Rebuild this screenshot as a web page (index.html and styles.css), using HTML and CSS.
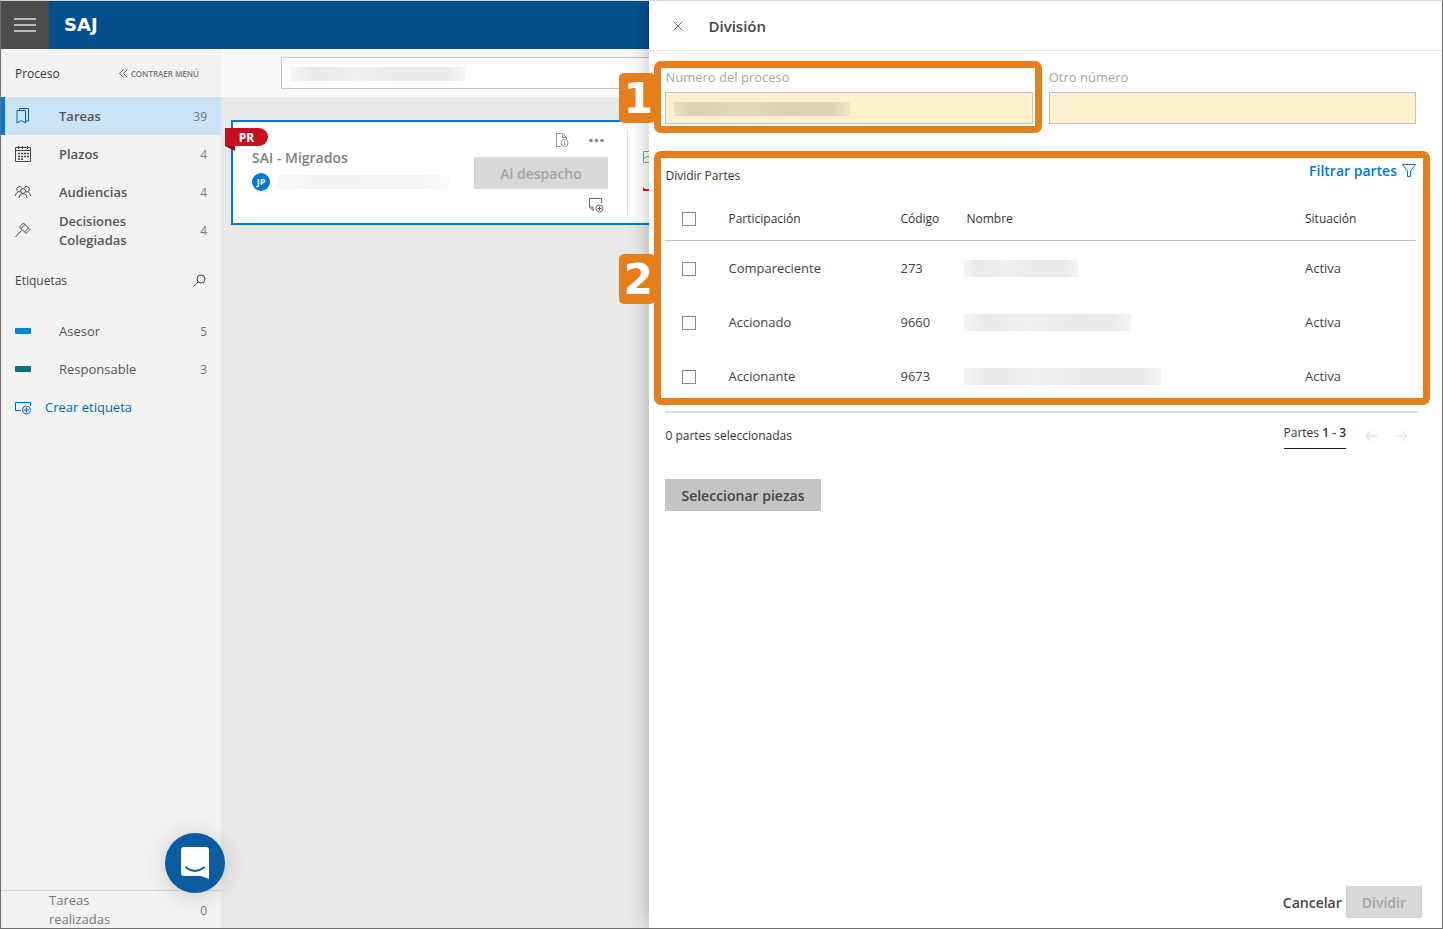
FILE: index.html
```html
<!DOCTYPE html>
<html lang="es">
<head>
<meta charset="utf-8">
<title>SAJ - División</title>
<link rel="stylesheet" href="styles.css">
</head>
<body>
<div class="app">
  <header class="topbar">
    <button class="menu-btn" aria-label="Menú">
      <svg width="22" height="14" viewBox="0 0 22 14" stroke="#ddd" stroke-width="1.500"><path d="M0 1h22M0 7h22M0 13h22"/></svg>
    </button>
    <span class="brand">SAJ</span>
  </header>

  <div class="workspace">
    <aside class="sidebar">
      <div class="side-head">
        <span class="side-title">Proceso</span>
        <button class="collapse">
          <svg width="9" height="9" viewBox="0 0 9 9" fill="none" stroke="#666" stroke-width="1"><path d="M4.500 .5l-4 4 4 4M8.500 .5l-4 4 4 4"/></svg>
          CONTRAER MENÚ
        </button>
      </div>
      <nav class="nav">
        <a class="nav-item active" href="#tareas">
          <svg class="nav-icon" viewBox="0 0 16 16" fill="none" stroke="#0060b0"><path d="M2 2.500h8.500v12.500l-4.250-2.500L2 15zM4.500 2.500v-2h9v12.500h-3"/></svg>
          <span class="nav-label">Tareas</span><span class="count">39</span>
        </a>
        <a class="nav-item" href="#plazos">
          <svg class="nav-icon" viewBox="0 0 16 16" fill="none" stroke="#444"><path d="M.5 1.500h15v14H.5zM.5 4.500h15M3.500 0v3M7.500 0v3M12.500 0v3"/><path stroke-width="1.500" stroke-dasharray="2 1" d="M3 7.500h11M3 10.500h11M3 13.200h5"/></svg>
          <span class="nav-label">Plazos</span><span class="count">4</span>
        </a>
        <a class="nav-item" href="#audiencias">
          <svg class="nav-icon" viewBox="0 0 16 16" fill="none" stroke="#444"><circle cx="8" cy="7" r="2.500"/><path d="M4 14c.2-3 1.800-4.300 4-4.300s3.800 1.300 4 4.300M5.200 7.800A2.700 2.700 0 1 1 6.500 3.500M10.800 7.800A2.700 2.700 0 1 0 9.500 3.500M.5 12c.1-2.300 1-3.600 2.700-4.200M15.500 12c-.1-2.300-1-3.600-2.700-4.200"/></svg>
          <span class="nav-label">Audiencias</span><span class="count">4</span>
        </a>
        <a class="nav-item" href="#decisiones">
          <svg class="nav-icon" viewBox="0 0 16 16" fill="none" stroke="#444"><path d="M8.500 1l6.500 6.500M4.500 5l6.500 6.500M8.500 1l-4 4M15 7.500l-4 4M10 2.500l-4 4M13.500 6l-4 4M6.500 8.500l-6 6.500"/></svg>
          <span class="nav-label">Decisiones Colegiadas</span><span class="count">4</span>
        </a>
      </nav>
      <div class="tags-head">
        <span class="side-title strong">Etiquetas</span>
        <button class="icon-btn" aria-label="Buscar etiquetas">
          <svg width="13" height="13" viewBox="0 0 13 13" fill="none" stroke="#444"><circle cx="8" cy="5" r="4"/><path d="M5 8L.5 12.500"/></svg>
        </button>
      </div>
      <nav class="nav">
        <a class="nav-item tag" href="#asesor"><span class="swatch blue"></span><span class="nav-label">Asesor</span><span class="count">5</span></a>
        <a class="nav-item tag" href="#responsable"><span class="swatch teal"></span><span class="nav-label">Responsable</span><span class="count">3</span></a>
        <a class="nav-item create" href="#crear">
          <svg class="nav-icon" viewBox="0 0 16 16" fill="none" stroke="#0066b8"><path d="M6 11.500H.5V3.500h15V7"/><circle cx="11.500" cy="11" r="4"/><path d="M11.500 8.500v5M9 11h5"/></svg>
          <span class="nav-label">Crear etiqueta</span>
        </a>
      </nav>
      <a class="side-foot" href="#realizadas"><span class="foot-label">Tareas realizadas</span><span class="count">0</span></a>
    </aside>

    <main class="main">
      <div class="search-row">
        <div class="search"><span class="mask search-mask"></span></div>
      </div>
      <article class="card">
        <div class="flag">PR</div>
        <div class="card-info">
          <h2 class="card-title">SAI - Migrados</h2>
          <div class="person"><span class="avatar">JP</span><span class="mask person-mask"></span></div>
        </div>
        <div class="card-actions">
          <div class="card-tools">
            <svg width="13" height="15" viewBox="0 0 13 15" fill="none" stroke="#999"><path d="M5 13.500H.5V.5h6l4 4V6M6.500 .5v4h4"/><circle cx="8.500" cy="10" r="3.500"/><path d="M8.500 8v4"/></svg>
            <svg width="15" height="5" viewBox="0 0 15 5" fill="#888"><circle cx="2" cy="2.500" r="1.800"/><circle cx="7.500" cy="2.500" r="1.800"/><circle cx="13" cy="2.500" r="1.800"/></svg>
          </div>
          <button class="btn muted dispatch" disabled>Al despacho</button>
          <svg class="note" width="15" height="15" viewBox="0 0 15 15" fill="none" stroke="#666"><path d="M12.500 5V.5H.5v8.500h3.500v3.500L.5 9M4 12h1"/><circle cx="10.500" cy="10.500" r="3.500"/><path d="M10.500 8.500v4M8.500 10.500h4"/></svg>
        </div>
        <div class="card-extra">
          <svg width="12" height="12" viewBox="0 0 12 12" fill="none" stroke="#999"><path d="M.5 .5h11v11H.5zM.5 8l3-2.500h8"/></svg>
          <svg width="12" height="4" viewBox="0 0 12 4" fill="#f01020"><path d="M0 0l2 2h10v2H0z"/></svg>
        </div>
      </article>
    </main>
  </div>

  <section class="drawer" aria-labelledby="drawer-title">
    <header class="drawer-head">
      <button class="icon-btn" aria-label="Cerrar">
        <svg width="10" height="10" viewBox="0 0 10 10" stroke="#666" stroke-width="1"><path d="M.5 .5l9 9M9.500 .5l-9 9"/></svg>
      </button>
      <h1 class="drawer-title" id="drawer-title">División</h1>
    </header>

    <div class="drawer-body">
      <div class="fields">
        <div class="field framed">
          <label for="numero">Numero del proceso</label>
          <div class="input-wrap"><input id="numero" type="text"><span class="mask input-mask"></span></div>
          <span class="step">1</span>
        </div>
        <div class="field">
          <label for="otro">Otro número</label>
          <input id="otro" type="text">
        </div>
      </div>

      <div class="parts framed">
        <div class="parts-head">
          <h2 class="parts-title">Dividir Partes</h2>
          <button class="filter">Filtrar partes
            <svg width="14" height="13" viewBox="0 0 14 13" fill="none" stroke="#0078d7"><path d="M.5 .5h13L8.500 7v5.500h-3V7z"/></svg>
          </button>
        </div>
        <table class="table">
          <colgroup><col class="c-check"><col class="c-part"><col class="c-code"><col><col class="c-state"></colgroup>
          <thead>
            <tr><th><input type="checkbox" aria-label="Seleccionar todas"></th><th>Participación</th><th>Código</th><th>Nombre</th><th>Situación</th></tr>
          </thead>
          <tbody>
            <tr><td><input type="checkbox" aria-label="Compareciente"></td><td>Compareciente</td><td>273</td><td><span class="mask name-a"></span></td><td>Activa</td></tr>
            <tr><td><input type="checkbox" aria-label="Accionado"></td><td>Accionado</td><td>9660</td><td><span class="mask name-b"></span></td><td>Activa</td></tr>
            <tr><td><input type="checkbox" aria-label="Accionante"></td><td>Accionante</td><td>9673</td><td><span class="mask name-c"></span></td><td>Activa</td></tr>
          </tbody>
        </table>
        <span class="step">2</span>
      </div>

      <div class="pager">
        <span class="selected">0 partes seleccionadas</span>
        <span class="range">Partes <b>1 - 3</b></span>
        <button class="icon-btn" aria-label="Anterior" disabled><svg width="12" height="12" viewBox="0 0 12 12" fill="none" stroke="#d8d8d8"><path d="M12 6H.8M6 .8L.8 6 6 11.200"/></svg></button>
        <button class="icon-btn" aria-label="Siguiente" disabled><svg width="12" height="12" viewBox="0 0 12 12" fill="none" stroke="#d8d8d8"><path d="M0 6h11.200M6 .8L11.200 6 6 11.200"/></svg></button>
      </div>

      <button class="btn pieces">Seleccionar piezas</button>
    </div>

    <footer class="drawer-foot">
      <button class="cancel">Cancelar</button>
      <button class="btn muted" disabled>Dividir</button>
    </footer>
  </section>

  <button class="chat" aria-label="Chat">
    <svg width="28" height="32" viewBox="0 0 28 32"><path fill="#fff" d="M3 0h22a3 3 0 0 1 3 3v29l-8-3H3a3 3 0 0 1-3-3V3a3 3 0 0 1 3-3z"/><path d="M5 20.500q9 7 18 0" fill="none" stroke="#0c5ca2" stroke-width="2" stroke-linecap="round"/></svg>
  </button>
</div>
</body>
</html>
```
FILE: styles.css
```css
* { box-sizing: border-box; }

body {
  margin: 0;
  font-family: "Open Sans", "Noto Sans", sans-serif;
  font-size: 13px;
  line-height: 19px;
  color: #333;
}

button {
  padding: 0;
  border: 0;
  background: none;
  font: inherit;
  color: inherit;
}

a { color: inherit; text-decoration: none; }
h1, h2 { margin: 0; }
svg { display: block; flex: none; }

.app {
  position: relative;
  display: flex;
  flex-direction: column;
  height: 100vh;
  border: 1px solid #707070;
  border-top-color: #d6d8dc;
  overflow: hidden;
}

.topbar {
  display: flex;
  align-items: center;
  gap: 15px;
  height: 48px;
  flex: none;
  background: #03508c;
}

.menu-btn {
  display: grid;
  place-items: center;
  width: 48px;
  height: 48px;
  background: #4c4c4c;
}

.brand {
  font: bold 18px/24px "DejaVu Sans", sans-serif;
  color: #fff;
}

.workspace { display: flex; flex: 1; min-height: 0; }

/* Sidebar */
.sidebar {
  display: flex;
  flex-direction: column;
  width: 220px;
  flex: none;
  background: #f3f3f3;
}

.side-head, .tags-head {
  display: flex;
  align-items: center;
  justify-content: space-between;
  padding: 0 22px 0 14px;
  height: 48px;
  flex: none;
}

.side-title { font-size: 12px; color: #333; }
.side-title.strong { font-weight: 500; color: #444; }
.tags-head { height: 63px; padding-right: 15px; }

.collapse {
  display: flex;
  align-items: center;
  gap: 3px;
  font-size: 8px;
  font-weight: 600;
  color: #777;
}

.nav-item {
  display: flex;
  align-items: center;
  height: 38px;
  padding: 0 14px;
  font-weight: 600;
  color: #555;
}

.nav-item.active {
  padding-left: 10px;
  border-left: 4px solid #0078d7;
  background: #cbe3f7;
}

.nav-icon { width: 16px; height: 16px; }
.nav-label { width: 110px; margin-left: 28px; padding-top: 1px; }
.count { margin-left: auto; font-size: 12px; font-weight: 400; color: #777; }
.nav-item.tag { font-weight: 400; }
.nav-item.create { font-weight: 400; color: #0067b8; }
.create .nav-label { margin-left: 14px; }

.swatch { width: 16px; height: 6px; border-radius: 1px; }
.blue { background: #0086d6; }
.teal { background: #007085; }

.side-foot {
  display: flex;
  align-items: center;
  height: 38px;
  margin-top: auto;
  padding: 1px 14px 0 48px;
  border-top: 1px solid #d4d4d4;
  color: #777;
}

.foot-label { width: 80px; }

/* Task list */
.main { flex: 1; min-width: 0; background: #e9e9e9; }

.search-row { padding: 8px 0 8px 60px; background: #f9f9f9; }

.search {
  display: flex;
  align-items: center;
  height: 32px;
  padding-left: 9px;
  border: 1px solid #c4c4c4;
  background: #fff;
}

.mask {
  display: block;
  background: linear-gradient(90deg, #f6f6f6, #e9e9e9 12%, #f0f0f0 38%, #eaeaea 65%, #ebebeb 90%, #f5f5f5);
}

.search-mask { width: 174px; height: 14px; margin-top: 2px; }

.card {
  position: relative;
  display: flex;
  height: 105px;
  margin: 23px 10px 0;
  padding: 8px 0;
  border: 2px solid #0078d7;
  background: #fff;
}

.flag {
  position: absolute;
  top: 6px;
  left: -8px;
  width: 43px;
  height: 18px;
  border-radius: 0 9px 9px 0;
  background: #c50f1f;
  color: #fff;
  font-size: 12px;
  font-weight: 700;
  line-height: 19px;
  text-align: center;
}

.flag::after {
  content: "";
  position: absolute;
  top: 18px;
  left: 0;
  border-top: 5px solid #8a0a14;
  border-left: 10px solid transparent;
}

.card-info { width: 241px; flex: none; padding: 18px 0 0 19px; }
.card-title { font-size: 14px; line-height: 19px; font-weight: 600; color: #808080; }
.person { display: flex; align-items: center; gap: 6px; margin-top: 6px; }

.avatar {
  width: 18px;
  height: 18px;
  border-radius: 50%;
  background: #0078d7;
  color: #fff;
  font-size: 9px;
  font-weight: 700;
  line-height: 18px;
  text-align: center;
}

.person-mask {
  width: 174px;
  height: 14px;
  background: linear-gradient(90deg, #fafafa, #f3f3f3 25%, #f5f5f5 85%, #fcfcfc);
}

.card-actions {
  display: flex;
  flex-direction: column;
  align-items: flex-end;
  width: 154px;
  flex: none;
  padding-right: 19px;
  border-right: 1px solid #e0e0e0;
}

.card-tools { display: flex; align-items: center; gap: 20px; padding: 3px 4px 9px 0; }

.btn {
  height: 32px;
  padding: 0 16px;
  background: #c4c4c4;
  font-size: 14px;
  font-weight: 600;
  color: #444;
}

.btn.muted { background: #d8d8d8; color: #a4a4a4; }
.dispatch { width: 134px; padding: 0; }
.note { margin: 9px 4px 0 0; }

.card-extra {
  display: flex;
  flex-direction: column;
  gap: 24px;
  padding: 21px 0 0 15px;
}

/* Drawer */
.drawer {
  position: absolute;
  top: 0;
  right: 0;
  bottom: 0;
  display: flex;
  flex-direction: column;
  width: 55%;
  background: #fff;
  box-shadow: 0 0 20px rgba(0, 0, 0, .28);
}

.drawer-head {
  display: flex;
  align-items: center;
  gap: 25px;
  height: 50px;
  flex: none;
  padding-left: 24px;
  border-bottom: 1px solid #e6e6e6;
}

.drawer-title { font-size: 15px; line-height: 20px; font-weight: 600; color: #444; }
.drawer-body { flex: 1; padding: 17px 26px 0 16px; }

.fields { display: grid; grid-template-columns: 1fr 1fr; gap: 16px; }
.field label { display: block; margin-bottom: 5px; color: #a6a6a6; }

.field input {
  display: block;
  width: 100%;
  height: 32px;
  padding: 0 8px;
  border: 1px solid #c2c2c2;
  background: #fff1cd;
  font: inherit;
}

.input-wrap { position: relative; }

.input-mask {
  position: absolute;
  top: 10px;
  left: 9px;
  width: 176px;
  height: 14px;
  background: linear-gradient(90deg, #eadfbf, #ddd1b3 10%, #e3d8b9 38%, #ddd2b3 65%, #dfd4b5 90%, #f3e6c5);
}

.framed { position: relative; }

.framed::after {
  content: "";
  position: absolute;
  inset: -7px -9px -9px -11px;
  border: 7px solid #e57f1b;
  border-radius: 7px;
  pointer-events: none;
}

.step {
  position: absolute;
  top: 5px;
  left: -46px;
  width: 36px;
  height: 50px;
  border-radius: 5px;
  background: #e57f1b;
  color: #fff;
  font: bold 42px/52px "DejaVu Sans", sans-serif;
  text-align: center;
  text-indent: 2px;
}

.parts { margin-top: 33px; }
.parts::after { inset: -6px -14px -3px -11px; }
.parts .step { top: 97px; }

.parts-head { display: flex; justify-content: space-between; height: 41px; }
.parts-title { padding-top: 9px; font-size: 12px; line-height: 19px; font-weight: 400; }

.filter {
  display: flex;
  align-items: center;
  gap: 5px;
  height: 26px;
  font-size: 14px;
  font-weight: 600;
  color: #0078d7;
}

.table {
  width: 100%;
  table-layout: fixed;
  border-collapse: collapse;
  color: #444;
}

.c-check { width: 63px; }
.c-part { width: 172px; }
.c-code { width: 66px; }
.c-state { width: 111px; }

.table th, .table td { height: 54px; padding: 2px 0 0; text-align: left; }
.table th { height: 42px; padding: 0 0 1px; font-size: 12px; font-weight: 400; color: #333; border-bottom: 1px solid #c2c2c2; }

.table input {
  appearance: none;
  display: block;
  width: 14px;
  height: 14px;
  margin: 2px 0 0 17px;
  border: 1px solid #888;
  background: #fff;
}

.table .mask { height: 17px; margin-left: -2px; }
.name-a { width: 114px; }
.name-b { width: 167px; }
.name-c { width: 197px; }

.pager {
  display: flex;
  align-items: center;
  gap: 19px;
  height: 51px;
  margin: 9px -2px 0 0;
  padding: 0 10px 4px 0;
  border-top: 2px solid #dedede;
  font-size: 12px;
}

.selected { margin-right: auto; }
.range { padding: 0 0 6px; border-bottom: 1px solid #222; }
.range b { font-weight: 600; }
.pieces { margin-top: 17px; }

.drawer-foot {
  display: flex;
  align-items: center;
  justify-content: flex-end;
  gap: 4px;
  padding: 0 20px 10px 16px;
}

.cancel { font-size: 14px; font-weight: 600; color: #444; }

.chat {
  position: absolute;
  left: 164px;
  bottom: 35px;
  display: grid;
  place-items: center;
  width: 60px;
  height: 60px;
  border-radius: 50%;
  background: #0c5ca2;
  box-shadow: 0 2px 24px rgba(0, 0, 0, .18);
}
```
